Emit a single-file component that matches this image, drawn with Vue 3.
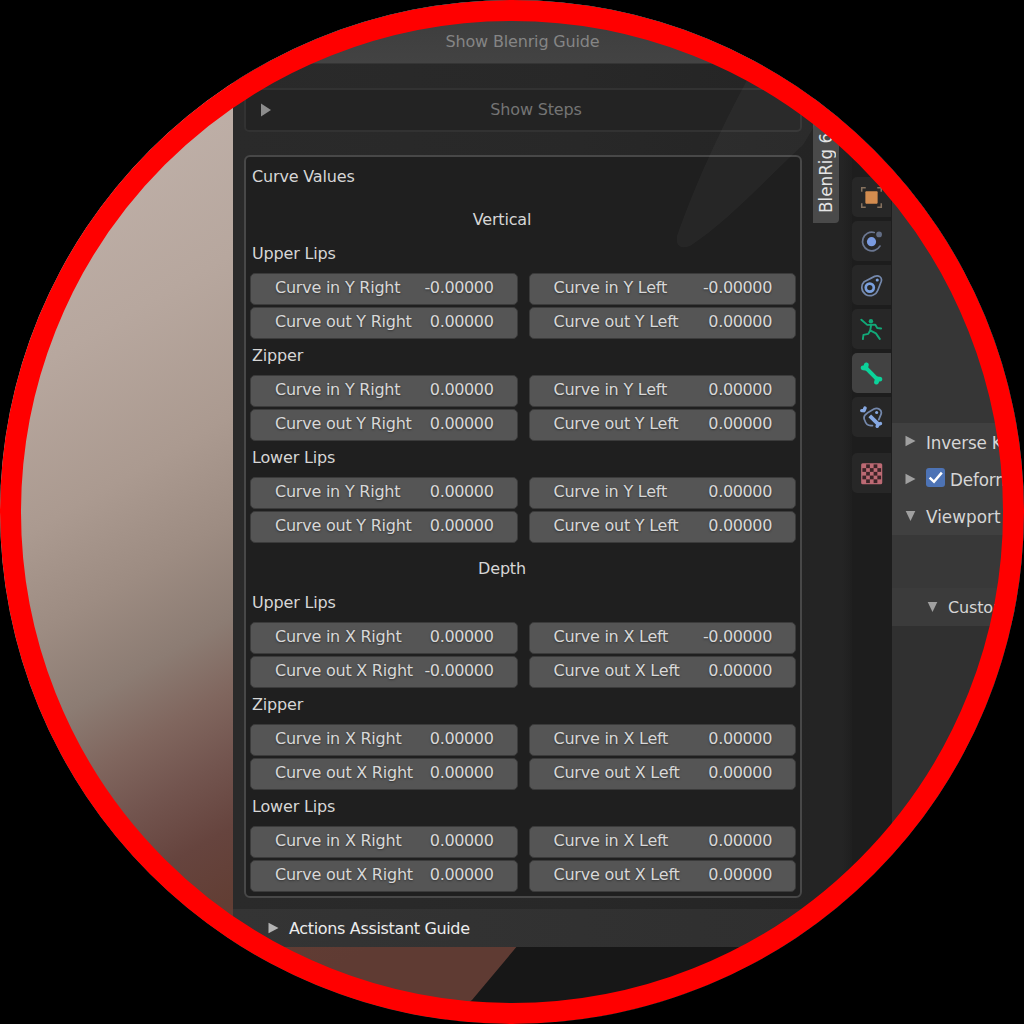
<script setup>
const pair = (axis, inR, outR, inL, outL) => [
  [{ label: `Curve in ${axis} Right`, value: inR }, { label: `Curve out ${axis} Right`, value: outR }],
  [{ label: `Curve in ${axis} Left`, value: inL }, { label: `Curve out ${axis} Left`, value: outL }],
]
const P = '0.00000'
const N = '-0.00000'
const sections = [
  {
    title: 'Vertical',
    groups: [
      { name: 'Upper Lips', cols: pair('Y', N, P, N, P) },
      { name: 'Zipper', cols: pair('Y', P, P, P, P) },
      { name: 'Lower Lips', cols: pair('Y', P, P, P, P) },
    ],
  },
  {
    title: 'Depth',
    groups: [
      { name: 'Upper Lips', cols: pair('X', P, N, N, P) },
      { name: 'Zipper', cols: pair('X', P, P, P, P) },
      { name: 'Lower Lips', cols: pair('X', P, P, P, P) },
    ],
  },
]
const checks = []
for (let r = 0; r < 5; r++) for (let c = 0; c < 5; c++) if ((r + c) % 2 === 1) checks.push({ x: 2.5 + c * 3.9, y: 2.5 + r * 3.9 })
</script>

<template>
  <div class="stage">
    <div class="lens">
      <svg class="scene" viewBox="0 0 1024 1024">
        <path d="M560 895 L472 1000 L440 1024 H1024 V895 Z" fill="#171717" />
      </svg>

      <div class="window">
        <div class="viewport"></div>

        <aside class="sidebar">
          <div class="guide">Show Blenrig Guide</div>
          <div class="body">
            <div class="steps">
              <svg class="tri" width="12" height="14" viewBox="0 0 12 14"><path d="M1 .5 L11 7 L1 13.5 Z" fill="#8c8c8c" /></svg>
              <span>Show Steps</span>
            </div>
            <section class="curves">
              <div class="row">Curve Values</div>
              <div v-for="s in sections" :key="s.title" class="section">
                <div class="row title">{{ s.title }}</div>
                <div v-for="g in s.groups" :key="g.name">
                  <div class="row">{{ g.name }}</div>
                  <div class="cols">
                    <div v-for="(col, i) in g.cols" :key="i" class="col">
                      <div v-for="f in col" :key="f.label" class="field">
                        <span>{{ f.label }}</span><span class="num">{{ f.value }}</span>
                      </div>
                    </div>
                  </div>
                </div>
              </div>
            </section>
          </div>
          <div class="actions">
            <svg width="11" height="12" viewBox="0 0 11 12"><path d="M.5 .8 L10.5 6 L.5 11.2 Z" fill="#b4b4b4" /></svg>
            <span>Actions Assistant Guide</span>
          </div>
        </aside>

        <div class="tabs"><div class="tab"><span>BlenRig 6</span></div></div>

        <nav class="icons">
          <div class="tile">
            <svg viewBox="0 0 24 24">
              <path d="M1.8 6 V1.8 H6 M18 1.8 H22.2 V6 M22.2 18 V22.2 H18 M6 22.2 H1.8 V18" fill="none" stroke="#86725f" stroke-width="1.6" />
              <rect x="5.6" y="5.6" width="12.8" height="12.8" rx=".8" fill="#d38c4f" />
            </svg>
          </div>
          <div class="tile">
            <svg viewBox="0 0 24 24">
              <path d="M14.8 2.6 A9.7 9.7 0 1 0 20.8 16.8" fill="none" stroke="#6a7690" stroke-width="1.8" stroke-linecap="round" />
              <circle cx="12" cy="12.2" r="4.8" fill="#7a9be0" />
              <circle cx="19.9" cy="4.6" r="3" fill="#626d85" />
            </svg>
          </div>
          <div class="tile">
            <svg viewBox="0 0 24 24">
              <path d="M4.4 8 L15.2 2.5 C19.2 .6 23.4 3.4 22.2 7.6 L18.6 17 A8.6 8.6 0 1 1 4.4 8 Z" fill="none" stroke="#7488ac" stroke-width="1.8" />
              <circle cx="10.2" cy="14.2" r="4.2" fill="none" stroke="#7aa0de" stroke-width="2.8" />
              <circle cx="18" cy="6.2" r="1.6" fill="#7aa0de" />
            </svg>
          </div>
          <div class="tile">
            <svg viewBox="0 0 24 24" fill="none" stroke="#12a878" stroke-width="2" stroke-linecap="round" stroke-linejoin="round">
              <path d="M1.4 1.8 L7.6 7.2 L16 7 L18 10.4 L22 11 M11.6 7.6 L10.6 13 L8.6 16.6 L3.6 17.6 L3 22 M10.6 13 L16.6 16 L20.6 21.8" />
              <circle cx="11.4" cy="3.4" r="2.3" fill="#12a878" stroke="none" />
            </svg>
          </div>
          <div class="tile active">
            <svg viewBox="0 0 24 24">
              <path d="M5.4 5.4 L18.6 18.6" stroke="#0cd29a" stroke-width="4.2" />
              <path d="M5.8 6.4 L3.2 6.2 M5.8 6.4 L6.6 3 M18.2 17.6 L17.2 21 M18.2 17.6 L20.8 17.8" stroke="#0cd29a" stroke-width="5" stroke-linecap="round" />
            </svg>
          </div>
          <div class="tile">
            <svg viewBox="0 0 24 24">
              <path d="M5 15 C3.2 12 5 9 8 7 L14.5 3.2 C18.5 1.2 23.4 4 22 8.5 L19.6 14.2 M5 15 C6 18.8 9 21 13 20.4" fill="none" stroke="#7488ac" stroke-width="1.8" stroke-linecap="round" />
              <path d="M10.2 10.2 L19 19" stroke="#86a8e2" stroke-width="4" />
              <path d="M19 19 L18 21.2 M19 19 L21.3 18.4 M4.2 4.8 L1.8 4.8 M4.2 4.8 L5.2 2.2" stroke="#86a8e2" stroke-width="3.6" stroke-linecap="round" />
              <circle cx="17.4" cy="6.8" r="1.6" fill="#86a8e2" />
            </svg>
          </div>
          <div class="tile texture">
            <svg viewBox="0 0 24 24">
              <rect x="1.2" y="1.2" width="22" height="22" rx="1.6" fill="#bd6a74" />
              <rect v-for="(c, i) in checks" :key="i" :x="c.x" :y="c.y" width="3.9" height="3.9" fill="#3c2428" />
            </svg>
          </div>
        </nav>

        <main class="props">
          <div class="spacer"></div>
          <div class="head">
            <svg width="11" height="12" viewBox="0 0 11 12"><path d="M.5 .8 L10.5 6 L.5 11.2 Z" /></svg>
            <span>Inverse K</span>
          </div>
          <div class="head">
            <svg width="11" height="12" viewBox="0 0 11 12"><path d="M.5 .8 L10.5 6 L.5 11.2 Z" /></svg>
            <i class="check"><svg width="19" height="19" viewBox="0 0 19 19"><path d="M3.6 9.6 L8 13.8 L15.8 4.6" fill="none" stroke="#fff" stroke-width="2.5" /></svg></i>
            <span>Deform</span>
          </div>
          <div class="head">
            <svg width="11" height="12" viewBox="0 0 11 12"><path d="M.7 1 H10.3 L5.5 11 Z" /></svg>
            <span class="wide">Viewport</span>
          </div>
          <div class="sub">
            <div class="head">
              <svg width="11" height="12" viewBox="0 0 11 12"><path d="M.7 1 H10.3 L5.5 11 Z" /></svg>
              <span>Custom</span>
            </div>
          </div>
        </main>
      </div>

      <svg class="sheen" viewBox="0 0 1024 1024">
        <path d="M758 60 C722 125 697 180 677 236 Q675 251 690 246 C730 220 772 173 803 145 L830 100 Z" fill="#fff" fill-opacity=".035" />
      </svg>
    </div>
  </div>
</template>

<style>
body { margin: 0; background: #000; }
</style>

<style scoped>
.stage {
  width: 1024px;
  height: 1024px;
  background: #000;
  overflow: hidden;
  font: 16px/34px "DejaVu Sans", sans-serif;
  letter-spacing: -0.16px;
  color: #d6d6d6;
}
.lens {
  position: relative;
  width: 1024px;
  height: 1024px;
  border-radius: 50%;
  overflow: hidden;
  background: linear-gradient(150deg, #beafa7 14%, #b7a79e 24%, #ab9a90 34%, #9d8c82 40.5%, #8c7c73 46.5%, #80665e 51%, #73554f 55%, #66443e 59.5%, #623e34 64%, #5f3b33 72%);
}
.lens::after {
  content: "";
  position: absolute;
  inset: 0;
  border: 21px solid #f00;
  border-radius: 50%;
}
.scene, .sheen { position: absolute; inset: 0; width: 1024px; height: 1024px; }
.window { position: relative; display: flex; height: 1024px; white-space: nowrap; }
.viewport { width: 233px; flex: none; }
.sidebar { width: 579px; flex: none; }
.guide {
  height: 64px;
  box-sizing: border-box;
  padding-top: 25px;
  background: linear-gradient(#3b3b3b, #434343);
  border-bottom: 1px solid #353535;
  color: #858585;
  text-align: center;
}
.body {
  height: 845px;
  box-sizing: border-box;
  padding: 24px 10px 0 11px;
  background: linear-gradient(90deg, #2a2a2a, #282828 60%, #242424);
}
.steps {
  position: relative;
  height: 44px;
  box-sizing: border-box;
  border: 2px solid #323232;
  border-radius: 5px;
  background: #232323;
  line-height: 40px;
  text-align: center;
  color: #747474;
  padding-left: 26px;
}
.tri { position: absolute; left: 14px; top: 13px; }
.curves {
  margin-top: 23px;
  height: 743px;
  box-sizing: border-box;
  border: 2px solid #484848;
  border-radius: 6px;
  padding: 3px 4px 0;
  background: #1f1f1f;
}
.row { height: 34px; padding-left: 2px; }
.section { padding-top: 9px; }
.title { text-align: center; padding: 0 42px 0 0; }
.cols { display: flex; gap: 11px; height: 66px; padding-top: 2px; }
.col { flex: 1; display: flex; flex-direction: column; gap: 2px; }
.field {
  height: 32px;
  box-sizing: border-box;
  border: 1px solid #3b3b3b;
  border-radius: 5px;
  background: #555;
  padding: 0 23px 0 24px;
  display: flex;
  justify-content: space-between;
  line-height: 28px;
  letter-spacing: -0.23px;
  color: #d8d8d8;
  text-shadow: 0 1px 2px #333;
}
.num { letter-spacing: -0.36px; }
.actions {
  height: 38px;
  display: flex;
  align-items: center;
  gap: 10px;
  padding-left: 35px;
  background: linear-gradient(90deg, #343434, #2f2f2f);
  color: #ececec;
  letter-spacing: -0.34px;
}
.actions span { padding-top: 1px; }
.tabs { width: 40px; flex: none; background: linear-gradient(90deg, #242424 30px, #1f1f1f); }
.tab {
  width: 26px;
  height: 223px;
  margin-left: 1px;
  background: #4a4a4a;
  border-radius: 0 0 4px 0;
}
.tab span {
  display: block;
  width: 26px;
  height: 213px;
  line-height: 26px;
  writing-mode: vertical-rl;
  transform: rotate(180deg);
  text-align: left;
  font-size: 16.8px;
  letter-spacing: 0;
  color: #e4e4e4;
}
.icons {
  width: 40px;
  flex: none;
  box-sizing: border-box;
  padding: 177px 1px 0 0;
  background: #1d1d1d;
  display: flex;
  flex-direction: column;
  gap: 4px;
}
.tile {
  height: 40px;
  border-radius: 5px 0 0 5px;
  background: #272727;
  display: flex;
  align-items: center;
  justify-content: center;
}
.tile svg { width: 23px; height: 23px; }
.active { background: #424242; }
.texture { margin-top: 12px; }
.props { flex: 1; background: #303030; }
.spacer { height: 423px; background: #363636; }
.head {
  height: 37.4px;
  display: flex;
  align-items: center;
  background: #404040;
  padding-left: 13px;
  font-size: 16.8px;
}
.head > svg { fill: #a0a0a0; margin: 0 10px 1px 0; }
.head span { padding-top: 2px; }
.head .wide { letter-spacing: 0.05px; }
.check { width: 19px; height: 19px; border-radius: 3px; background: #4d73b5; display: flex; margin: 0 5px 3px 0; }
.sub { height: 91px; box-sizing: border-box; padding-top: 53px; background: #383838; }
.sub .head { height: 38px; padding-left: 35px; background: #3b3b3b; font-size: 16px; }
</style>
